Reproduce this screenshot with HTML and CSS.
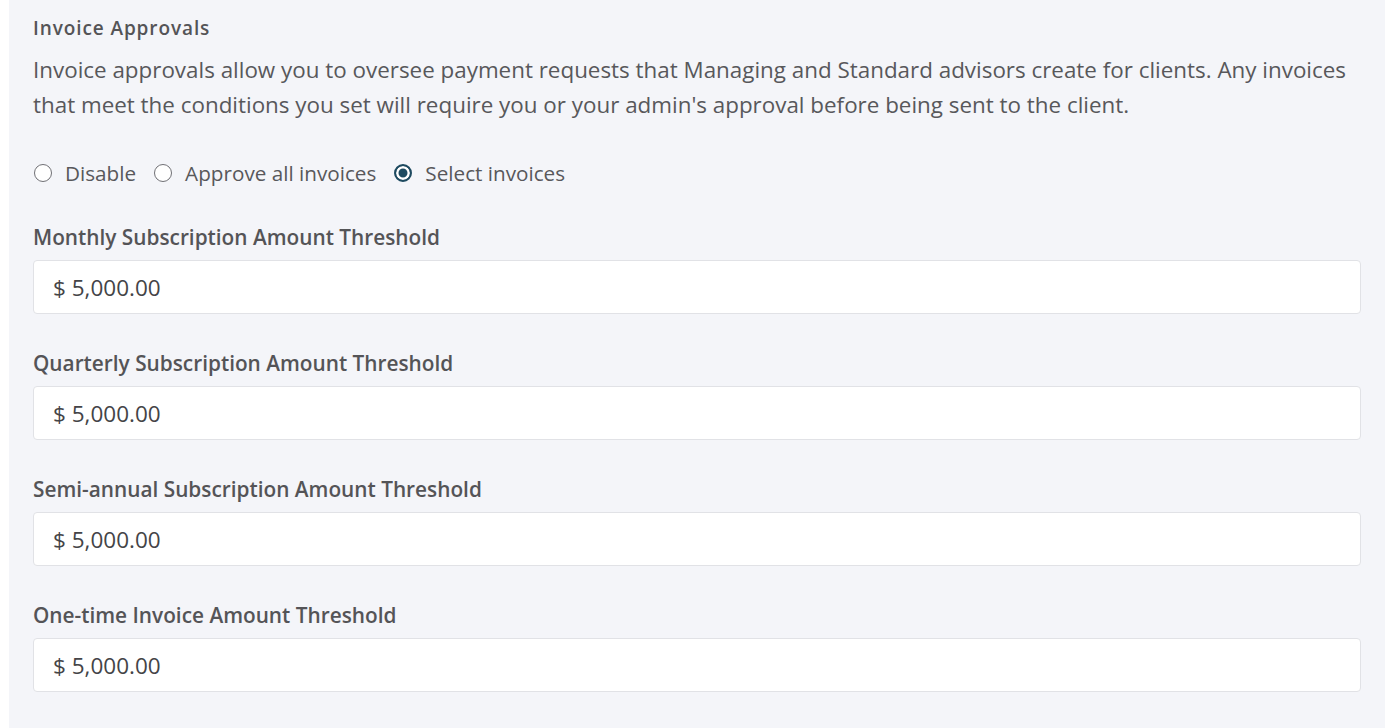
FILE: index.html
```html
<!DOCTYPE html>
<html lang="en">
<head>
<meta charset="utf-8">
<title>Invoice Approvals</title>
<link rel="stylesheet" href="styles.css">
</head>
<body>
<section class="panel">
  <h2 class="title">Invoice Approvals</h2>
  <p class="desc">Invoice approvals allow you to oversee payment requests that Managing and Standard advisors create for clients. Any invoices that meet the conditions you set will require you or your admin's approval before being sent to the client.</p>
  <div class="radios">
    <label class="radio"><span class="dot"></span>Disable</label>
    <label class="radio"><span class="dot"></span>Approve all invoices</label>
    <label class="radio"><span class="dot checked"></span>Select invoices</label>
  </div>
  <div class="field">
    <div class="label">Monthly Subscription Amount Threshold</div>
    <div class="input">$ 5,000.00</div>
  </div>
  <div class="field">
    <div class="label">Quarterly Subscription Amount Threshold</div>
    <div class="input">$ 5,000.00</div>
  </div>
  <div class="field">
    <div class="label">Semi-annual Subscription Amount Threshold</div>
    <div class="input">$ 5,000.00</div>
  </div>
  <div class="field">
    <div class="label">One-time Invoice Amount Threshold</div>
    <div class="input">$ 5,000.00</div>
  </div>
</section>
</body>
</html>
```
FILE: styles.css
```css
html, body {
  margin: 0;
  padding: 0;
  background: #ffffff;
}
body {
  font-family: "Open Sans", "Noto Sans", sans-serif;
  color: #555558;
}
.panel {
  margin-left: 9px;
  width: 1376px;
  box-sizing: border-box;
  padding: 16px 24px 40px 24px;
  background: #f4f5f9;
  min-height: 760px;
}
.title {
  margin: 0;
  font-size: 19px;
  line-height: 24px;
  font-weight: 600;
  letter-spacing: 0.9px;
  color: #545457;
}
.desc {
  margin: 12px 0 0 0;
  font-size: 22.4px;
  line-height: 35px;
  color: #58585b;
}
.radios {
  display: flex;
  align-items: center;
  margin-top: 36px;
  height: 30px;
}
.radio {
  display: flex;
  align-items: center;
  font-size: 20.7px;
  color: #58585b;
  margin-right: 17px;
}
.dot {
  width: 18px;
  height: 18px;
  box-sizing: border-box;
  border: 1.5px solid #707075;
  border-radius: 50%;
  background: #fff;
  margin-left: 1px;
  margin-right: 13px;
}
.dot.checked {
  border: 2px solid #1e4a60;
  background: #1e4a60;
  box-shadow: inset 0 0 0 2.5px #fff;
}
.field {
  margin-top: 35px;
}
.label {
  font-size: 20.8px;
  line-height: 28px;
  font-weight: 600;
  color: #545457;
}
.input {
  margin-top: 9px;
  height: 54px;
  box-sizing: border-box;
  border: 1px solid #e1e2e6;
  border-radius: 4px;
  background: #fff;
  padding: 0 19px;
  display: flex;
  align-items: center;
  font-size: 22.5px;
  color: #444447;
}
```
